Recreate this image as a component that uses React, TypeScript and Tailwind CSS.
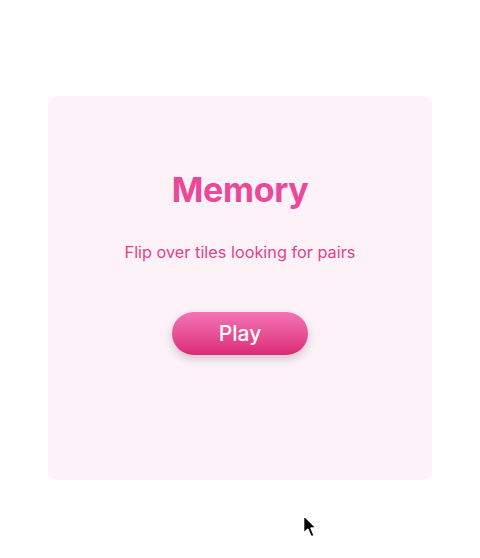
export default function App() {
  return (
    <div
      className="relative min-h-[558px] w-full bg-white"
      style={{ fontFamily: 'Inter, "Noto Sans", sans-serif' }}
    >
      <div className="pt-[96px] flex justify-center">
        <div className="w-[384px] h-[384px] rounded-[10px] bg-[#fdf2f8] flex flex-col items-center pt-[70px]">
          <h1 className="text-[34px] leading-[48px] font-bold text-[#ec4899] tracking-[-0.01em]">Memory</h1>
          <p className="mt-[26px] text-[16.3px] leading-[24px] text-[#e0438b]">Flip over tiles looking for pairs</p>
          <button className="mt-[48px] w-[136px] h-[43px] rounded-full bg-gradient-to-b from-[#f472b6] to-[#db2777] text-white text-[21px] font-medium shadow-[0_4px_10px_rgba(0,0,0,0.18)]">
            Play
          </button>
        </div>
      </div>

      {/* mouse pointer */}
      <svg className="absolute left-[300px] top-[513px]" width="20" height="26" viewBox="0 0 18 24">
        <path d="M3 2 L3 19 L7 15 L10 22 L13 21 L10 14 L15 14 Z" fill="#000" stroke="#fff" strokeWidth="1.5" strokeLinejoin="round" />
      </svg>
    </div>
  );
}
